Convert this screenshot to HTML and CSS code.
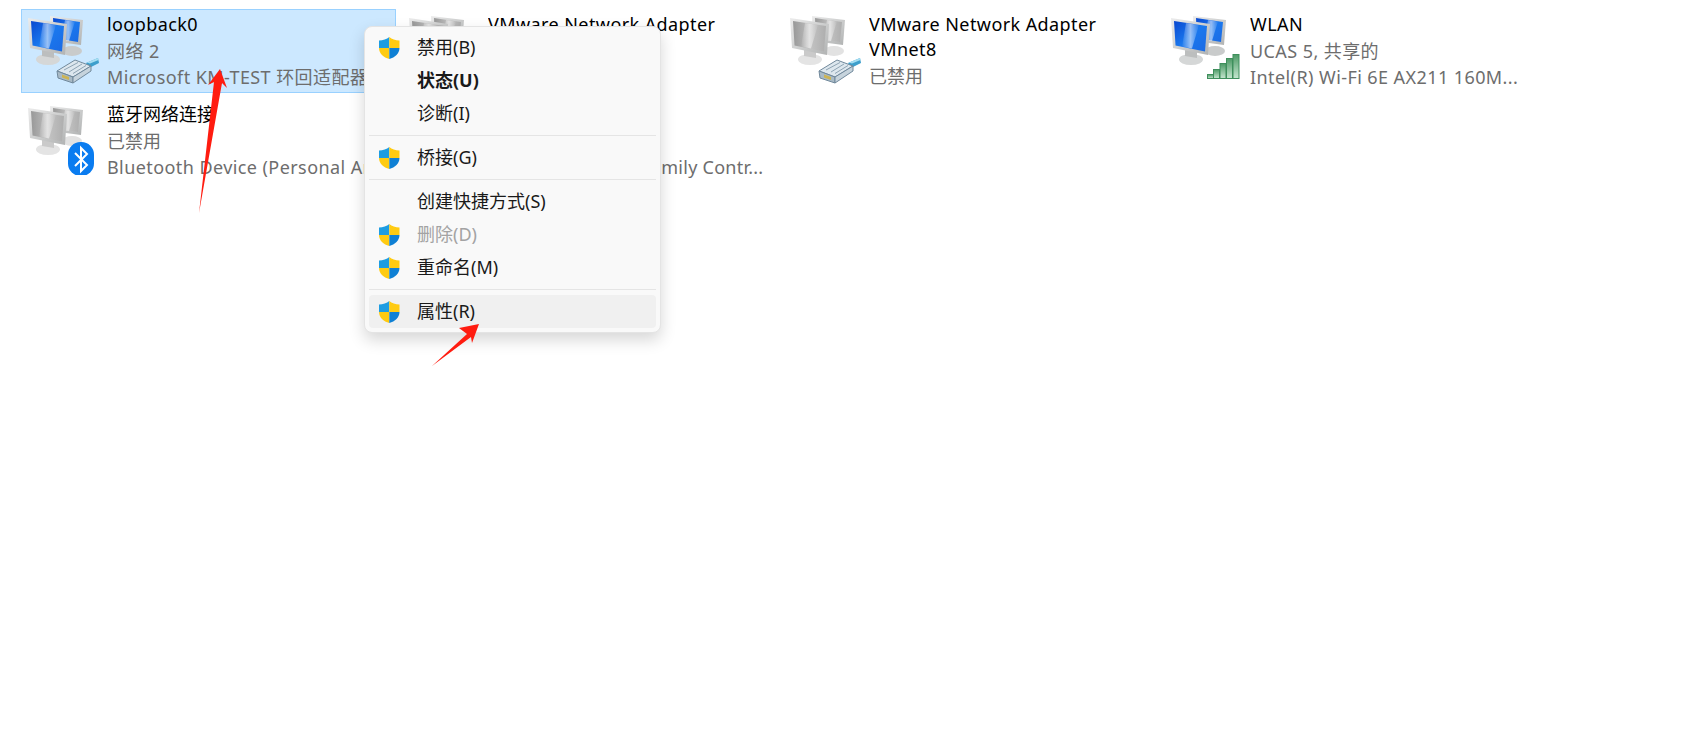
FILE: index.html
```html
<!DOCTYPE html>
<html lang="zh-CN">
<head>
<meta charset="utf-8">
<title>网络连接</title>
<link rel="stylesheet" href="styles.css">
</head>
<body>
<svg class="defs" width="0" height="0" aria-hidden="true">
  <defs>
    <linearGradient id="bezel" x1="0" y1="0" x2="1" y2="1"><stop offset="0" stop-color="#ececec"/><stop offset="1" stop-color="#b0b2b2"/></linearGradient>
    <linearGradient id="blue" x1="0" y1="0" x2="1" y2="1"><stop offset="0" stop-color="#0a48d0"/><stop offset=".5" stop-color="#1a78ee"/><stop offset="1" stop-color="#1b6ae4"/></linearGradient>
    <linearGradient id="gray" x1="0" y1="0" x2="1" y2="0"><stop offset="0" stop-color="#989898"/><stop offset=".55" stop-color="#c2c2c2"/><stop offset="1" stop-color="#aeaeae"/></linearGradient>
    <linearGradient id="glare" x1="0" y1="0" x2="1" y2="0"><stop offset="0" stop-color="#fff" stop-opacity=".05"/><stop offset=".5" stop-color="#fff" stop-opacity=".55"/><stop offset="1" stop-color="#fff" stop-opacity=".05"/></linearGradient>
    <linearGradient id="bar" x1="0" y1="0" x2="0" y2="1"><stop offset="0" stop-color="#4d9a66"/><stop offset="1" stop-color="#c5e6cf"/></linearGradient>
    <clipPath id="shield-clip"><path d="M10.300 0C7.800 2.200 4 3.400 0 3.600V11C0 16.500 4.500 20.400 10.300 22C16 20.400 20.500 16.500 20.500 11V3.600C16.500 3.400 12.800 2.200 10.300 0Z"/></clipPath>
    <symbol id="pc-blue" viewBox="0 0 72 72">
      <ellipse cx="45" cy="38" rx="10" ry="5" fill="#c9cbcb"/>
      <path d="M23 3 56 7 54 32 24 28Z" fill="url(#bezel)"/>
      <path d="M26 5 53 9 51 29 27 25Z" fill="url(#blue)"/>
      <path d="M38 7 48 8.500 42 28 34 27Z" fill="url(#glare)"/>
      <ellipse cx="21" cy="46.500" rx="12" ry="5.500" fill="#d5d7d7"/>
      <path d="M15 36 27 38 27 45 15 43Z" fill="#bcbebe"/>
      <path d="M1 5 40 11 38 42 3 35Z" fill="url(#bezel)"/>
      <path d="M4 8 37 13 35 38.500 5.500 32.500Z" fill="url(#blue)"/>
      <path d="M16 10 29 12 22 35.500 12 33.500Z" fill="url(#glare)"/>
    </symbol>
    <symbol id="pc-gray" viewBox="0 0 72 72">
      <ellipse cx="45" cy="38" rx="10" ry="5" fill="#e2e2e2"/>
      <path d="M23 3 56 7 54 32 24 28Z" fill="url(#bezel)"/>
      <path d="M26 5 53 9 51 29 27 25Z" fill="url(#gray)"/>
      <path d="M38 7 48 8.500 42 28 34 27Z" fill="url(#glare)"/>
      <ellipse cx="21" cy="46.500" rx="12" ry="5.500" fill="#e4e4e4"/>
      <path d="M15 36 27 38 27 45 15 43Z" fill="#cacaca"/>
      <path d="M1 5 40 11 38 42 3 35Z" fill="url(#bezel)"/>
      <path d="M4 8 37 13 35 38.500 5.500 32.500Z" fill="url(#gray)"/>
      <path d="M16 10 29 12 22 35.500 12 33.500Z" fill="url(#glare)"/>
    </symbol>
    <symbol id="plug" viewBox="0 0 72 72">
      <path d="M59 50 71 45 72 50 62 55Z" fill="#3d9fcc"/>
      <path d="M60 49.500 71 45 71.500 47 63 50.500Z" fill="#a6def2"/>
      <g stroke="#70889b" stroke-width="1" stroke-linejoin="round">
        <path d="M30 58 48 47 64 53 46 64Z" fill="#dde7ee"/>
        <path d="M30 58 46 64 46 70 31 65Z" fill="#a9bac6"/>
        <path d="M46 64 64 53 64 58 46 70Z" fill="#c6d3dc"/>
      </g>
      <path d="M35 61.500 42 64 42 67 35 64.500Z" fill="#cdb454"/>
      <path d="M37 57 51 49.500M42 59 55 51M46 60.500 59 52.500" stroke="#8ea3b3" fill="none"/>
    </symbol>
    <symbol id="bars" viewBox="0 0 72 72">
      <g fill="url(#bar)" stroke="#3f8f5c" stroke-width="1">
        <rect x="37.500" y="61.500" width="6" height="4"/>
        <rect x="43.500" y="56.500" width="6" height="9"/>
        <rect x="50" y="50.500" width="6" height="15"/>
        <rect x="56.500" y="45.500" width="6" height="20"/>
        <rect x="63" y="41.500" width="6" height="24"/>
      </g>
    </symbol>
    <symbol id="bt" viewBox="0 0 72 72">
      <rect x="41" y="39" width="26" height="34" rx="12.500" fill="#0a7cf0"/>
      <path d="M48 50 60 62 54 68V45L60 51 48 63" fill="none" stroke="#fff" stroke-width="2"/>
    </symbol>
    <symbol id="shield" viewBox="0 0 21 22">
      <g clip-path="url(#shield-clip)">
        <rect x="0" y="0" width="10.300" height="11" fill="#1e9de2"/>
        <rect x="10.300" y="0" width="11" height="11" fill="#ffcb12"/>
        <rect x="0" y="11" width="10.300" height="11" fill="#ffcb12"/>
        <rect x="10.300" y="11" width="11" height="11" fill="#0f80d4"/>
      </g>
    </symbol>
  </defs>
</svg>

<main class="grid">
  <div class="item selected">
    <svg class="icon" viewBox="0 0 72 72"><use href="#pc-blue"/><use href="#plug"/></svg>
    <div class="text">
      <div class="title">loopback0</div>
      <div class="sub">网络 2</div>
      <div class="sub">Microsoft KM-TEST 环回适配器</div>
    </div>
  </div>
  <div class="item">
    <svg class="icon" viewBox="0 0 72 72"><use href="#pc-gray"/><use href="#plug"/></svg>
    <div class="text">
      <div class="title">VMware Network Adapter<br>VMnet1</div>
      <div class="sub cjk">已禁用</div>
    </div>
  </div>
  <div class="item">
    <svg class="icon" viewBox="0 0 72 72"><use href="#pc-gray"/><use href="#plug"/></svg>
    <div class="text">
      <div class="title">VMware Network Adapter<br>VMnet8</div>
      <div class="sub cjk">已禁用</div>
    </div>
  </div>
  <div class="item">
    <svg class="icon" viewBox="0 0 72 72"><use href="#pc-blue"/><use href="#bars"/></svg>
    <div class="text">
      <div class="title">WLAN</div>
      <div class="sub">UCAS 5, 共享的</div>
      <div class="sub">Intel(R) Wi-Fi 6E AX211 160M...</div>
    </div>
  </div>
  <div class="item">
    <svg class="icon" viewBox="0 0 72 72"><use href="#pc-gray"/><use href="#bt"/></svg>
    <div class="text">
      <div class="title cjk">蓝牙网络连接</div>
      <div class="sub cjk">已禁用</div>
      <div class="sub">Bluetooth Device (Personal Ar...</div>
    </div>
  </div>
  <div class="item">
    <svg class="icon" viewBox="0 0 72 72"><use href="#pc-gray"/><use href="#plug"/></svg>
    <div class="text">
      <div class="title cjk">以太网</div>
      <div class="sub cjk">网络电缆被拔出</div>
      <div class="sub tight">Realtek PCIe GbE Family Contr...</div>
    </div>
  </div>
</main>

<nav class="menu">
  <div class="row"><svg class="shield"><use href="#shield"/></svg><span class="label">禁用(B)</span></div>
  <div class="row strong"><span class="slot"></span><span class="label">状态(U)</span></div>
  <div class="row"><span class="slot"></span><span class="label">诊断(I)</span></div>
  <div class="sep"></div>
  <div class="row"><svg class="shield"><use href="#shield"/></svg><span class="label">桥接(G)</span></div>
  <div class="sep"></div>
  <div class="row"><span class="slot"></span><span class="label">创建快捷方式(S)</span></div>
  <div class="row disabled"><svg class="shield"><use href="#shield"/></svg><span class="label">删除(D)</span></div>
  <div class="row"><svg class="shield"><use href="#shield"/></svg><span class="label">重命名(M)</span></div>
  <div class="sep"></div>
  <div class="row hover"><svg class="shield"><use href="#shield"/></svg><span class="label">属性(R)</span></div>
</nav>

<svg class="arrows" width="1687" height="750" viewBox="0 0 1687 750" aria-hidden="true">
  <path d="M220 69 227 88 222 83 199 213 214 82 208 85Z" fill="#ff1c10"/>
  <path d="M479 324 472 343 471 337 432 366 467 334 459 328Z" fill="#ff1c10"/>
</svg>
</body>
</html>
```

FILE: styles.css
```css
* { box-sizing: border-box; }
html, body { margin: 0; height: 100%; background: #fff; overflow: hidden; }
body {
  font-family: "Noto Sans", "Noto Sans CJK SC", sans-serif;
  font-size: 18px;
  color: #000;
}
.defs { position: absolute; }
.grid {
  display: grid;
  grid-template-columns: repeat(4, 375px);
  grid-auto-rows: 84px;
  column-gap: 6px;
  row-gap: 6px;
  padding: 9px 0 0 21px;
}
.item {
  display: flex;
  align-items: flex-start;
  gap: 8px;
  padding: 2px 5px 0;
  border: 1px solid transparent;
  overflow: hidden;
}
.selected { background: #cce8ff; border-color: #99d1ff; }
.icon { width: 72px; height: 72px; flex: none; margin-top: 1px; filter: blur(.4px); }
.text { min-width: 0; flex: 1; white-space: nowrap; overflow: hidden; letter-spacing: .42px; }
.title { line-height: 25px; margin-bottom: 1px; color: #000; }
.sub { line-height: 26px; color: #6d6d6d; }
.cjk { letter-spacing: 0; }
.tight { letter-spacing: .25px; }

.menu {
  position: absolute;
  left: 364px;
  top: 26px;
  width: 297px;
  height: 307px;
  padding: 4px;
  background: #f9f9f9;
  border: 1px solid #e4e4e4;
  border-radius: 8px;
  box-shadow: 0 7px 16px rgba(0, 0, 0, .16);
  color: #1a1a1a;
}
.row {
  display: flex;
  align-items: center;
  height: 33px;
  padding-left: 10px;
  gap: 17px;
  border-radius: 4px;
}
.label { margin-bottom: 4px; }
.shield, .slot { width: 21px; height: 22px; flex: none; }
.strong { font-weight: 700; }
.disabled { color: #a3a3a3; }
.hover { background: #f0f0f0; }
.sep { height: 1px; margin: 5px 0; background: #e5e5e5; }
.arrows { position: absolute; left: 0; top: 0; pointer-events: none; }
```
